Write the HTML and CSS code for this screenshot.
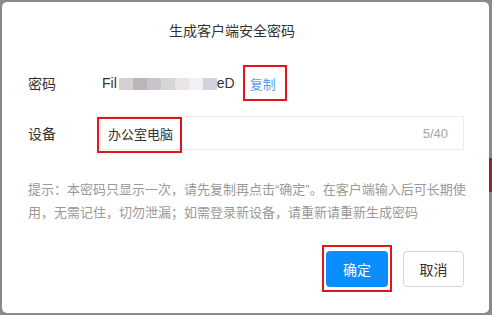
FILE: index.html
```html
<!DOCTYPE html>
<html lang="zh-CN">
<head>
    <meta charset="UTF-8">
    <title>生成客户端安全密码</title>
    <link rel="stylesheet" href="styles.css">
</head>
<body>
    <div class="dialog">
        <div class="dialog_title">生成客户端安全密码</div>
        <div class="row row_pwd">
            <span class="row_label">密码</span>
            <span class="pwd">Fil<span class="blur">
                <i class="b1"></i><i class="b2"></i><i class="b3"></i><i class="b4"></i><i class="b5"></i><i class="b6"></i><i class="b7"></i>
            </span>eD</span>
            <span class="copy">复制</span>
        </div>
        <div class="row row_device">
            <span class="row_label">设备</span>
            <div class="field">
                <span class="field_value">办公室电脑</span>
                <span class="field_count">5/40</span>
                <span class="mark mark_field"></span>
            </div>
        </div>
        <p class="hint">提示：本密码只显示一次，请先复制再点击“确定”。在客户端输入后可长期使用，无需记住，切勿泄漏；如需登录新设备，请重新请重新生成密码</p>
        <div class="actions">
            <button class="btn btn_ok">确定</button>
            <button class="btn btn_cancel">取消</button>
        </div>
    </div>
</body>
</html>
```

FILE: styles.css
```css
html, body {
    margin: 0;
    padding: 0;
}

body {
    width: 492px;
    height: 315px;
    overflow: hidden;
    background: linear-gradient(#8e2626, #8e2626) no-repeat right 0 top 158px / 3px 34px, #8a8a8a;
    font-family: 'Liberation Sans', 'Noto Sans CJK SC', sans-serif;
    color: #333;
}

.dialog {
    margin: 2px 3px 0 2px;
    height: 311px;
    box-sizing: border-box;
    padding: 19px 25px 0 24px;
    background-color: #ffffff;
    border-radius: 5px;
}

.dialog_title {
    text-align: center;
    font-size: 14px;
    line-height: 20px;
    padding-right: 26px;
}

.row {
    display: flex;
    align-items: center;
    font-size: 14px;
}

.row_label {
    width: 74px;
    flex: none;
    padding-left: 2px;
    box-sizing: border-box;
}

.row_pwd {
    margin-top: 27px;
    height: 30px;
}

.pwd {
    display: inline-flex;
    align-items: center;
    padding-left: 2px;
    font-size: 14px;
}

.blur {
    display: inline-flex;
    height: 12px;
    margin-top: 2px;
    margin-left: 2px;
}

.blur i {
    display: block;
    width: 14px;
    height: 12px;
}

.blur .b1 { background: #d3d1d3; }
.blur .b2 { background: #bab6b8; }
.blur .b3 { background: #c9c4c9; }
.blur .b4 { background: #d6d5d8; }
.blur .b5 { background: #e9e5e5; }
.blur .b6 { background: #f1f1f3; }
.blur .b7 { background: #d6d0dc; }

.copy {
    position: relative;
    margin-left: 15px;
    color: #5c9df0;
    font-size: 13px;
}

.copy::after {
    content: '';
    position: absolute;
    left: -7px;
    right: -11px;
    top: -9px;
    bottom: -8px;
    border: 2px solid #e3141c;
}

.row_device {
    margin-top: 18px;
}

.field {
    position: relative;
    flex: 1;
    height: 34px;
    box-sizing: border-box;
    border: 1px solid #ececec;
    display: flex;
    align-items: center;
    justify-content: space-between;
    padding: 0 15px 0 7px;
    font-size: 13px;
}

.field_count {
    color: #a6a6a6;
    font-size: 13px;
}

.mark_field {
    position: absolute;
    left: -4px;
    top: 0;
    width: 81px;
    height: 32px;
    border: 2px solid #e3141c;
}

.hint {
    margin: 28px -8px 0 0;
    padding-left: 2px;
    font-size: 13px;
    line-height: 23px;
    color: #999;
}

.actions {
    display: flex;
    justify-content: flex-end;
    gap: 15px;
    margin-top: 27px;
}

.btn {
    height: 36px;
    border-radius: 4px;
    font-family: 'Liberation Sans', 'Noto Sans CJK SC', sans-serif;
    font-size: 14px;
    cursor: pointer;
}

.btn_ok {
    position: relative;
    width: 62px;
    border: none;
    background-color: #0a8dff;
    color: #ffffff;
}

.btn_ok::after {
    content: '';
    position: absolute;
    left: -4px;
    right: -4px;
    top: -6px;
    bottom: -5px;
    border: 2px solid #e3141c;
}

.btn_cancel {
    width: 61px;
    border: 1px solid #d5d5d5;
    background-color: #ffffff;
    color: #333;
}
```
